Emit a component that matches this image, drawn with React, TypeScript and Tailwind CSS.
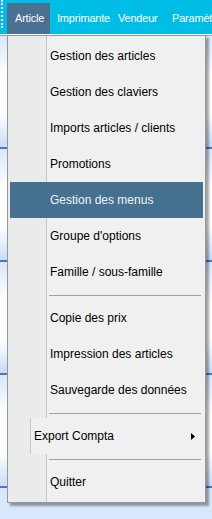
import React from "react";

type Entry =
  | { kind: "item"; label: string; active?: boolean }
  | { kind: "sub"; label: string }
  | { kind: "sep" };

const entries: Entry[] = [
  { kind: "item", label: "Gestion des articles" },
  { kind: "item", label: "Gestion des claviers" },
  { kind: "item", label: "Imports articles / clients" },
  { kind: "item", label: "Promotions" },
  { kind: "item", label: "Gestion des menus", active: true },
  { kind: "item", label: "Groupe d'options" },
  { kind: "item", label: "Famille / sous-famille" },
  { kind: "sep" },
  { kind: "item", label: "Copie des prix" },
  { kind: "item", label: "Impression des articles" },
  { kind: "item", label: "Sauvegarde des données" },
  { kind: "sep" },
  { kind: "sub", label: "Export Compta" },
  { kind: "sep" },
  { kind: "item", label: "Quitter" },
];

function MenuBar() {
  return (
    <div className="h-[34px] bg-[#00bde6] flex items-start pt-[3px] text-[11px] tracking-[-0.2px] text-white overflow-hidden">
      <div className="shrink-0 w-[7px] h-[28px] -mt-[3px] pl-[1px]">
        <div className="h-full w-[3px] border-l-2 border-dotted border-white" />
      </div>
      <div className="shrink-0 w-[43px] h-[31px] bg-[#4a7192] flex items-center pl-[8px]">Article</div>
      <div className="shrink-0 w-[61px] h-[31px] flex items-center pl-[7px]">Imprimante</div>
      <div className="shrink-0 w-[54px] h-[31px] flex items-center pl-[7px]">Vendeur</div>
      <div className="shrink-0 h-[31px] flex items-center pl-[7px] whitespace-nowrap">Paramètres</div>
    </div>
  );
}

function Backdrop() {
  return (
    <div>
      <div className="h-[2px] bg-white border-b border-[#a0a0a0]" />
      {[0, 1, 2, 3].map((i) => (
        <div
          key={i}
          className="h-[113px] bg-[linear-gradient(to_bottom,#d8e7fb_0%,#ffffff_35%,#ffffff_70%,#c7dcf7_100%)] border-b-2 border-[#4a78b8]"
        />
      ))}
      <div className="h-[40px] bg-[#d8e7fb]" />
    </div>
  );
}

function Dropdown() {
  return (
    <div className="absolute left-[7px] top-[35px] w-[199px] border border-[#979797] shadow-[3px_3px_2px_rgba(0,0,0,0.35)] py-[2px] bg-[linear-gradient(to_right,#e9eceb_38px,#c5c5c5_38px,#c5c5c5_39px,#f0f0f0_39px)] text-[12px] text-black">
      {entries.map((e, i) => {
        if (e.kind === "sep") {
          return (
            <div key={i} className="h-[10px] flex items-center pl-[41px] pr-[4px]">
              <div className="h-px w-full bg-[#a0a0a0]" />
            </div>
          );
        }
        if (e.kind === "sub") {
          return (
            <div key={i} className="h-[36px] flex">
              <div className="w-[22px]" />
              <div className="flex-1 bg-[#f0f0f0] border-l border-[#c5c5c5] flex items-center pl-[3px] pr-[10px]">
                <span className="flex-1">{e.label}</span>
                <svg width="4" height="7" viewBox="0 0 4 7">
                  <path d="M0 0 L4 3.5 L0 7 Z" fill="#000" />
                </svg>
              </div>
            </div>
          );
        }
        if (e.active) {
          return (
            <div key={i} className="h-[36px] mx-[2px] bg-[#46708f] text-[#eef3f7] flex items-center pl-[40px]">
              {e.label}
            </div>
          );
        }
        return (
          <div key={i} className="h-[36px] flex items-center pl-[42px]">
            {e.label}
          </div>
        );
      })}
    </div>
  );
}

export default function App() {
  return (
    <div className="relative w-[212px] h-[519px] overflow-hidden bg-white font-['Liberation_Sans',Arial,sans-serif]">
      <MenuBar />
      <Backdrop />
      <Dropdown />
    </div>
  );
}
